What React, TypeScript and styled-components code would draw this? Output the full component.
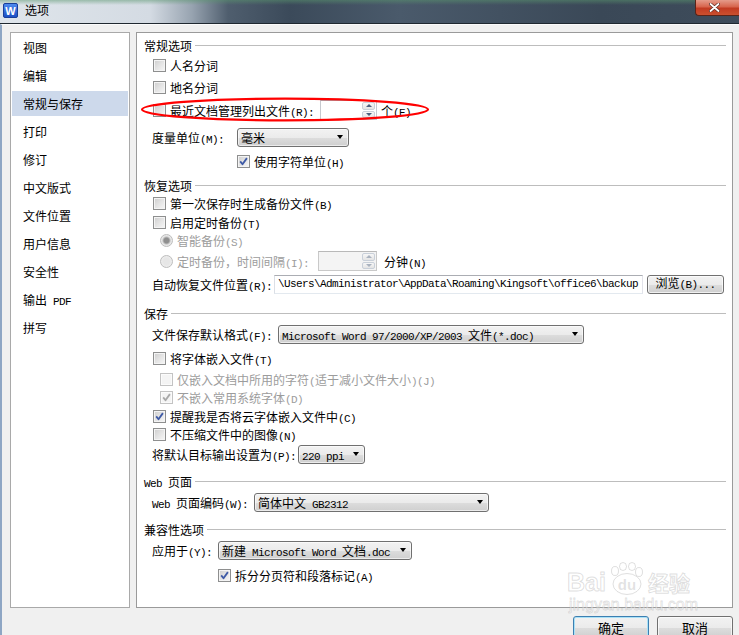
import React from 'react';
import styled, { createGlobalStyle } from 'styled-components';

const Global = createGlobalStyle`
  html, body { margin: 0; padding: 0; background: #f0f0f0; }
  body {
    font-family: "Noto Sans CJK SC", "Liberation Sans", sans-serif;
    font-size: 12px;
    color: #000;
  }
  * { box-sizing: border-box; }
`;

const Window = styled.div`
  width: 739px;
  height: 635px;
  overflow: hidden;
  position: relative;
  display: flex;
  flex-direction: column;
  background: #f0f0f0;
`;

const TitleBar = styled.div`
  height: 24px;
  flex: none;
  display: flex;
  align-items: flex-start;
  padding: 3px 0 0 3px;
  border-bottom: 1px solid #1f2830;
  background:
    linear-gradient(180deg, rgba(90, 150, 110, 0.5) 0, rgba(90, 150, 110, 0) 5px),
    linear-gradient(90deg, #dfe5eb 0, #d4dbe3 150px, #97a3b0 192px, #4f5e6e 228px, #3b4a5a 290px, #4a5a6b 400px, #3a4857 600px, #3e4c5b 100%);
`;

const Logo = styled.svg`
  flex: none;
`;

const Title = styled.span`
  margin-left: 7px;
  line-height: 14px;
  font-size: 12px;
  color: #000;
`;

const CloseBtn = styled.div`
  margin-left: auto;
  margin-top: -3px;
  width: 44px;
  height: 16px;
  border: 1px solid #5a2418;
  border-top: none;
  border-right: none;
  border-radius: 0 0 0 4px;
  background: linear-gradient(180deg, #e59b8a 0%, #d7654d 45%, #c23b22 55%, #c9502f 100%);
  display: flex;
  align-items: center;
  justify-content: center;
  padding-right: 6px;
`;

const Body = styled.div`
  flex: 1;
  display: flex;
  flex-direction: column;
  border-top: 1px solid #fbfbfb;
  border-left: 2px solid #8ea6c4;
  padding: 7px 0 0 8px;
`;

const Main = styled.div`
  display: flex;
  gap: 6px;
  height: 576px;
  flex: none;
`;

const NavList = styled.div`
  width: 120px;
  border: 1px solid #a9a9a9;
  background: #fff;
  padding: 2px 1px 0;
  display: flex;
  flex-direction: column;
  gap: 3px;
`;

const NavItem = styled.div<{ $active?: boolean }>`
  height: 25px;
  display: flex;
  align-items: center;
  padding: 0 0 1px 11px;
  white-space: pre;
  background: ${(p) => (p.$active ? '#cdd9eb' : 'transparent')};
`;

const Panel = styled.div`
  position: relative;
  width: 597px;
  border: 1px solid #9a9a9a;
  background: #fff;
  padding-top: 3px;
  display: flex;
  flex-direction: column;
`;

const Row = styled.div<{ $mt?: number; $x?: number }>`
  display: flex;
  align-items: center;
  height: 18px;
  flex: none;
  margin-top: ${(p) => p.$mt ?? 0}px;
  padding-left: ${(p) => p.$x ?? 0}px;
  white-space: nowrap;
`;

const HeadLine = styled.span`
  flex: 1;
  height: 1px;
  background: #bdbdbd;
  margin: 1px 6px 0 3px;
`;

const Latin = styled.span`
  font-family: "Liberation Mono", "DejaVu Sans Mono", monospace;
  font-size: 11px;
  letter-spacing: -0.6px;
`;

const Item = styled.span<{ $w?: number; $disabled?: boolean }>`
  display: inline-flex;
  align-items: center;
  gap: 4px;
  flex: none;
  width: ${(p) => (p.$w ? `${p.$w}px` : 'auto')};
  color: ${(p) => (p.$disabled ? '#9c9c9c' : '#000')};
`;

const Label = styled.span<{ $w?: number }>`
  display: inline-block;
  flex: none;
  width: ${(p) => (p.$w ? `${p.$w}px` : 'auto')};
`;

const Box = styled.span<{ $disabled?: boolean }>`
  width: 13px;
  height: 13px;
  flex: none;
  display: inline-flex;
  align-items: center;
  justify-content: center;
  border: 1px solid ${(p) => (p.$disabled ? '#c3c3c3' : '#8e8f8f')};
  background: ${(p) =>
    p.$disabled ? '#f4f4f4' : 'linear-gradient(135deg, #cdcdcd 0%, #e4e4e4 50%, #f7f7f7 100%)'};
  box-shadow: inset 0 0 0 1px ${(p) => (p.$disabled ? '#fbfbfb' : '#f4f4f4')};
`;

const RadioDot = styled.span<{ $checked?: boolean }>`
  width: 13px;
  height: 13px;
  flex: none;
  border-radius: 50%;
  border: 1px solid #bdbdbd;
  background: ${(p) =>
    p.$checked
      ? 'radial-gradient(circle, #8f8f8f 0 2.5px, #bdbdbd 3.5px, #e6e6e6 4.5px, #f4f4f4 100%)'
      : 'radial-gradient(circle, #e6e6e6 0 3px, #f4f4f4 100%)'};
`;

const Combo = styled.div<{ $w: number }>`
  width: ${(p) => p.$w}px;
  height: 19px;
  flex: none;
  border: 1px solid #707070;
  border-radius: 3px;
  background: linear-gradient(180deg, #f2f2f2 0%, #ebebeb 50%, #dddddd 51%, #cfcfcf 100%);
  box-shadow: inset 0 0 0 1px rgba(255, 255, 255, 0.6);
  display: flex;
  align-items: center;
  padding: 0 5px 0 3px;
`;

const ComboText = styled.span`
  flex: 1;
  overflow: hidden;
  white-space: nowrap;
`;

const Arrow = styled.span`
  width: 0;
  height: 0;
  flex: none;
  border-left: 3.5px solid transparent;
  border-right: 3.5px solid transparent;
  border-top: 4px solid #000;
`;

const Spin = styled.div<{ $w: number; $disabled?: boolean }>`
  width: ${(p) => p.$w}px;
  height: 20px;
  flex: none;
  border: 1px solid ${(p) => (p.$disabled ? '#c9c9c9' : '#c6c9cf')};
  border-top-color: ${(p) => (p.$disabled ? '#b9b9b9' : '#abadb3')};
  background: ${(p) => (p.$disabled ? '#f4f4f4' : '#fff')};
  display: flex;
  justify-content: flex-end;
  padding: 1px;
`;

const SpinBtns = styled.div`
  width: 13px;
  display: flex;
  flex-direction: column;
  gap: 1px;
`;

const SpinBtn = styled.span`
  flex: 1;
  border: 1px solid #c9d0d9;
  border-radius: 2px;
  background: linear-gradient(180deg, #f7f7f7, #e4e4e4);
  display: flex;
  align-items: center;
  justify-content: center;
`;

const SpinArrow = styled.span<{ $up?: boolean; $disabled?: boolean }>`
  width: 0;
  height: 0;
  border-left: 3px solid transparent;
  border-right: 3px solid transparent;
  ${(p) => (p.$up ? 'border-bottom' : 'border-top')}: 3px solid ${(p) => (p.$disabled ? '#a9b2bf' : '#4c607f')};
`;

const After = styled.span<{ $ml: number }>`
  margin-left: ${(p) => p.$ml}px;
  flex: none;
`;

const PathInput = styled.div`
  width: 369px;
  height: 19px;
  flex: none;
  border: 1px solid #e2e3ea;
  border-top-color: #abadb3;
  border-left-color: #dbdfe6;
  border-bottom-color: #e3e9ef;
  background: #fff;
  padding-left: 3px;
  display: flex;
  align-items: center;
  overflow: hidden;
  white-space: nowrap;
`;

const PushButton = styled.div<{ $w: number; $h: number; $fs: number; $ml?: number; $default?: boolean }>`
  width: ${(p) => p.$w}px;
  height: ${(p) => p.$h}px;
  margin-left: ${(p) => p.$ml ?? 0}px;
  flex: none;
  font-size: ${(p) => p.$fs}px;
  line-height: ${(p) => p.$fs + 1}px;
  border: 1px solid ${(p) => (p.$default ? '#3c7fb1' : '#707070')};
  border-radius: 3px;
  background: linear-gradient(180deg, #f2f2f2 0%, #ebebeb 50%, #dddddd 51%, #cfcfcf 100%);
  box-shadow: inset 0 0 0 1px ${(p) => (p.$default ? '#a9e1f7' : 'rgba(255,255,255,0.7)')};
  display: flex;
  align-items: center;
  justify-content: center;
  white-space: nowrap;
`;

const Footer = styled.div`
  display: flex;
  justify-content: flex-end;
  gap: 8px;
  padding: 8px 6px 0 0;
`;

const Ellipse = styled.svg`
  position: absolute;
  left: 2px;
  top: 64px;
  pointer-events: none;
`;

const Watermark = styled.div`
  position: absolute;
  left: 567px;
  top: 560px;
  pointer-events: none;
  display: flex;
  flex-direction: column;
`;

const WmTop = styled.div`
  display: flex;
  align-items: flex-end;
  height: 36px;
`;

const WmBai = styled.span`
  font-family: "Liberation Sans", sans-serif;
  font-weight: bold;
  font-size: 25px;
  line-height: 28px;
  color: rgba(255, 255, 255, 0.5);
  -webkit-text-stroke: 1px rgba(140, 140, 140, 0.28);
`;

const WmJy = styled.span`
  font-family: "Noto Sans CJK SC", sans-serif;
  font-weight: bold;
  font-size: 21px;
  line-height: 28px;
  color: rgba(255, 255, 255, 0.5);
  -webkit-text-stroke: 1px rgba(140, 140, 140, 0.28);
`;

const WmUrl = styled.span`
  font-family: "Liberation Sans", sans-serif;
  font-size: 16px;
  line-height: 18px;
  margin-left: 2px;
  color: rgba(255, 255, 255, 0.5);
  -webkit-text-stroke: 0.8px rgba(140, 140, 140, 0.28);
`;

function Txt({ s }: { s: string }) {
  const parts = s.split(/([\x20-\x7e]+)/);
  return (
    <>
      {parts.map((p, i) =>
        p === '' ? null : /^[\x20-\x7e]+$/.test(p) ? (
          <Latin key={i}>{p}</Latin>
        ) : (
          <React.Fragment key={i}>{p}</React.Fragment>
        )
      )}
    </>
  );
}

function CheckMark({ color }: { color: string }) {
  return (
    <svg width="9" height="9" viewBox="0 0 9 9">
      <path d="M1.2 4.4 L3.5 7.2 L7.9 1.1" fill="none" stroke={color} strokeWidth="1.8" strokeLinejoin="round" />
    </svg>
  );
}

function Check({
  text,
  checked,
  disabled,
  w,
}: {
  text: string;
  checked?: boolean;
  disabled?: boolean;
  w?: number;
}) {
  return (
    <Item $w={w} $disabled={disabled}>
      <Box $disabled={disabled}>{checked && <CheckMark color={disabled ? '#a8a8a8' : '#3e5aa6'} />}</Box>
      <span>
        <Txt s={text} />
      </span>
    </Item>
  );
}

function Radio({ text, checked, w }: { text: string; checked?: boolean; w?: number }) {
  return (
    <Item $w={w} $disabled>
      <RadioDot $checked={checked} />
      <span>
        <Txt s={text} />
      </span>
    </Item>
  );
}

function Head({ text, mt }: { text: string; mt: number }) {
  return (
    <Row $mt={mt} $x={7}>
      <span>
        <Txt s={text} />
      </span>
      <HeadLine />
    </Row>
  );
}

function Dropdown({ w, text }: { w: number; text: string }) {
  return (
    <Combo $w={w}>
      <ComboText>
        <Txt s={text} />
      </ComboText>
      <Arrow />
    </Combo>
  );
}

function SpinBox({ w, disabled }: { w: number; disabled?: boolean }) {
  return (
    <Spin $w={w} $disabled={disabled}>
      <SpinBtns>
        <SpinBtn>
          <SpinArrow $up $disabled={disabled} />
        </SpinBtn>
        <SpinBtn>
          <SpinArrow $disabled={disabled} />
        </SpinBtn>
      </SpinBtns>
    </Spin>
  );
}

const navItems = ['视图', '编辑', '常规与保存', '打印', '修订', '中文版式', '文件位置', '用户信息', '安全性', '输出 PDF', '拼写'];

export default function App() {
  return (
    <Window>
      <Global />
      <TitleBar>
        <Logo width="15" height="15" viewBox="0 0 15 15">
          <defs>
            <linearGradient id="lg" x1="0" y1="0" x2="0" y2="1">
              <stop offset="0" stopColor="#4f8cf0" />
              <stop offset="1" stopColor="#1b4fc4" />
            </linearGradient>
          </defs>
          <rect x="0.5" y="0.5" width="14" height="14" rx="1.5" fill="url(#lg)" stroke="#1a3f99" />
          <text x="7.5" y="11.8" textAnchor="middle" fontFamily="Liberation Sans, sans-serif" fontWeight="bold" fontSize="11" fill="#fff">
            W
          </text>
        </Logo>
        <Title>选项</Title>
        <CloseBtn>
          <svg width="11" height="9" viewBox="0 0 11 9">
            <path d="M1.5 1 L9.5 8 M9.5 1 L1.5 8" stroke="#5a2a22" strokeWidth="3.2" strokeLinecap="round" />
            <path d="M1.5 1 L9.5 8 M9.5 1 L1.5 8" stroke="#fff" strokeWidth="1.8" strokeLinecap="round" />
          </svg>
        </CloseBtn>
      </TitleBar>
      <Body>
        <Main>
          <NavList>
            {navItems.map((n) => (
              <NavItem key={n} $active={n === '常规与保存'}>
                <span>
                  <Txt s={n} />
                </span>
              </NavItem>
            ))}
          </NavList>
          <Panel>
            <Head text="常规选项" mt={0} />
            <Row $mt={2} $x={16}>
              <Check text="人名分词" />
            </Row>
            <Row $mt={4} $x={16}>
              <Check text="地名分词" />
            </Row>
            <Row $mt={5} $x={16}>
              <Check text="最近文档管理列出文件(R):" w={167} />
              <SpinBox w={57} />
              <After $ml={4}>
                <Txt s="个(E)" />
              </After>
            </Row>
            <Row $mt={9} $x={15}>
              <Label $w={85}>
                <Txt s="度量单位(M):" />
              </Label>
              <Dropdown w={112} text="毫米" />
            </Row>
            <Row $mt={6} $x={100}>
              <Check text="使用字符单位(H)" checked />
            </Row>

            <Head text="恢复选项" mt={6} />
            <Row $mt={0} $x={16}>
              <Check text="第一次保存时生成备份文件(B)" />
            </Row>
            <Row $mt={1} $x={16}>
              <Check text="启用定时备份(T)" />
            </Row>
            <Row $mt={0} $x={23}>
              <Radio text="智能备份(S)" checked />
            </Row>
            <Row $mt={3} $x={23}>
              <Radio text="定时备份，时间间隔(I):" w={158} />
              <SpinBox w={59} disabled />
              <After $ml={7}>
                <Txt s="分钟(N)" />
              </After>
            </Row>
            <Row $mt={5} $x={15}>
              <Label $w={122}>
                <Txt s="自动恢复文件位置(R):" />
              </Label>
              <PathInput>
                <Txt s="\Users\Administrator\AppData\Roaming\Kingsoft\office6\backup" />
              </PathInput>
              <PushButton $w={77} $h={19} $fs={12} $ml={4}>
                <span>
                  <Txt s="浏览(B)..." />
                </span>
              </PushButton>
            </Row>

            <Head text="保存" mt={11} />
            <Row $mt={3} $x={15}>
              <Label $w={126}>
                <Txt s="文件保存默认格式(F):" />
              </Label>
              <Dropdown w={306} text="Microsoft Word 97/2000/XP/2003 文件(*.doc)" />
            </Row>
            <Row $mt={6} $x={16}>
              <Check text="将字体嵌入文件(T)" />
            </Row>
            <Row $mt={3} $x={23}>
              <Check text="仅嵌入文档中所用的字符(适于减小文件大小)(J)" disabled />
            </Row>
            <Row $mt={0} $x={23}>
              <Check text="不嵌入常用系统字体(D)" disabled checked />
            </Row>
            <Row $mt={1} $x={16}>
              <Check text="提醒我是否将云字体嵌入文件中(C)" checked />
            </Row>
            <Row $mt={0} $x={16}>
              <Check text="不压缩文件中的图像(N)" />
            </Row>
            <Row $mt={2} $x={15}>
              <Label $w={146}>
                <Txt s="将默认目标输出设置为(P):" />
              </Label>
              <Dropdown w={67} text="220 ppi" />
            </Row>

            <Head text="Web 页面" mt={9} />
            <Row $mt={3} $x={15}>
              <Label $w={102}>
                <Txt s="Web 页面编码(W):" />
              </Label>
              <Dropdown w={235} text="简体中文 GB2312" />
            </Row>

            <Head text="兼容性选项" mt={9} />
            <Row $mt={3} $x={15}>
              <Label $w={66}>
                <Txt s="应用于(Y):" />
              </Label>
              <Dropdown w={194} text="新建 Microsoft Word 文档.doc" />
            </Row>
            <Row $mt={7} $x={81}>
              <Check text="拆分分页符和段落标记(A)" checked />
            </Row>

            <Ellipse width="292" height="26" viewBox="0 0 292 26">
              <ellipse cx="146" cy="12.5" rx="143" ry="10.8" fill="none" stroke="#ff0000" strokeWidth="2.2" />
            </Ellipse>
          </Panel>
        </Main>
        <Footer>
          <PushButton $w={76} $h={23} $fs={13} $default>
            确定
          </PushButton>
          <PushButton $w={76} $h={23} $fs={13}>
            取消
          </PushButton>
        </Footer>
      </Body>
      <Watermark>
        <WmTop>
          <WmBai>Bai</WmBai>
          <svg width="42" height="34" viewBox="0 0 42 34">
            <g fill="rgba(255,255,255,0.5)" stroke="rgba(140,140,140,0.28)" strokeWidth="1">
              <ellipse cx="9" cy="9" rx="3.5" ry="4.5" />
              <ellipse cx="17" cy="4.5" rx="3.5" ry="4" />
              <ellipse cx="26" cy="4.5" rx="3.5" ry="4" />
              <ellipse cx="33" cy="10" rx="3.5" ry="4.5" />
              <ellipse cx="21" cy="22" rx="14" ry="10.5" />
            </g>
            <text x="21" y="28" textAnchor="middle" fontFamily="Liberation Sans, sans-serif" fontWeight="bold" fontSize="15" fill="rgba(140,140,140,0.25)">
              du
            </text>
          </svg>
          <WmJy>经验</WmJy>
        </WmTop>
        <WmUrl>jingyan.baidu.com</WmUrl>
      </Watermark>
    </Window>
  );
}
